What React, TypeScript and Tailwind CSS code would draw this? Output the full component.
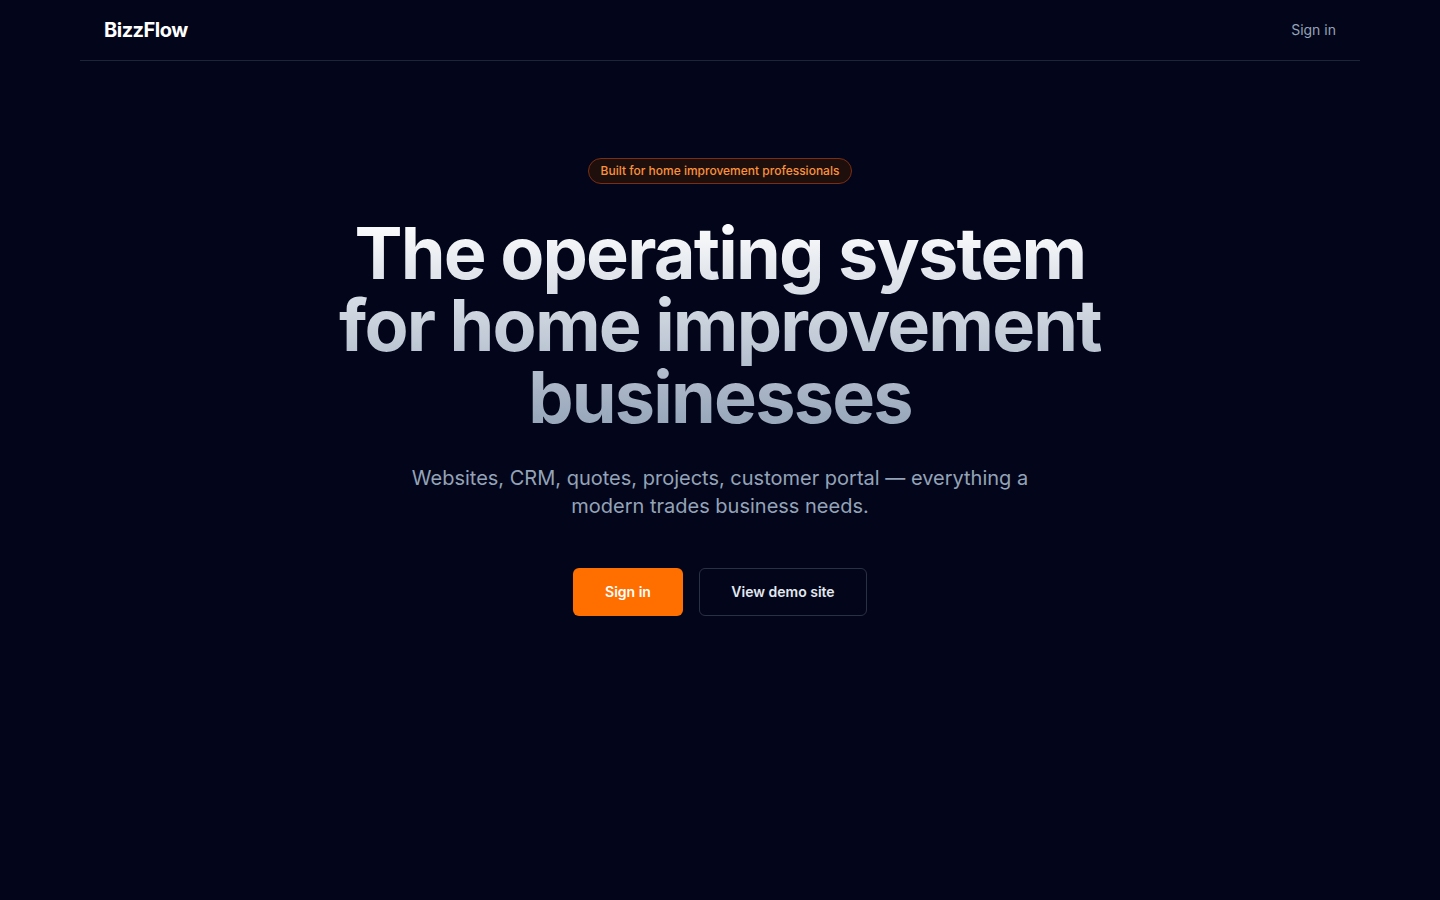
export default function App() {
  return (
    <div className="min-h-screen bg-[#03061a] font-['Inter','Liberation_Sans',sans-serif] text-white">
      <header className="mx-auto flex h-[61px] max-w-[1280px] items-center justify-between border-b border-[#1e2536] px-6">
        <span className="text-[20px] font-bold tracking-tight text-white">BizzFlow</span>
        <a href="#" className="text-sm text-[#94a3b8]">Sign in</a>
      </header>

      <main className="mx-auto flex max-w-[1280px] flex-col items-center px-6 pt-[97px] text-center">
        <span className="rounded-full border border-[#7c2d12] bg-[#1f0f0c] px-3 py-[4px] text-xs font-medium text-[#fb923c]">
          Built for home improvement professionals
        </span>

        <h1 className="mt-[33px] bg-gradient-to-b from-white to-[#94a3b8] bg-clip-text text-[72px] font-bold leading-[72px] tracking-[-0.025em] text-transparent">
          The operating system
          <br />
          for home improvement
          <br />
          businesses
        </h1>

        <p className="mt-[31px] max-w-[640px] text-xl leading-7 text-[#94a3b8]">
          Websites, CRM, quotes, projects, customer portal — everything a modern trades business needs.
        </p>

        <div className="mt-[48px] flex items-center gap-4">
          <a href="#" className="flex h-12 w-[110px] items-center justify-center rounded-md bg-[#ff6f00] text-sm font-semibold text-white">
            Sign in
          </a>
          <a href="#" className="flex h-12 w-[168px] items-center justify-center rounded-md border border-[#2a3142] text-sm font-semibold text-[#e2e8f0]">
            View demo site
          </a>
        </div>
      </main>
    </div>
  );
}
